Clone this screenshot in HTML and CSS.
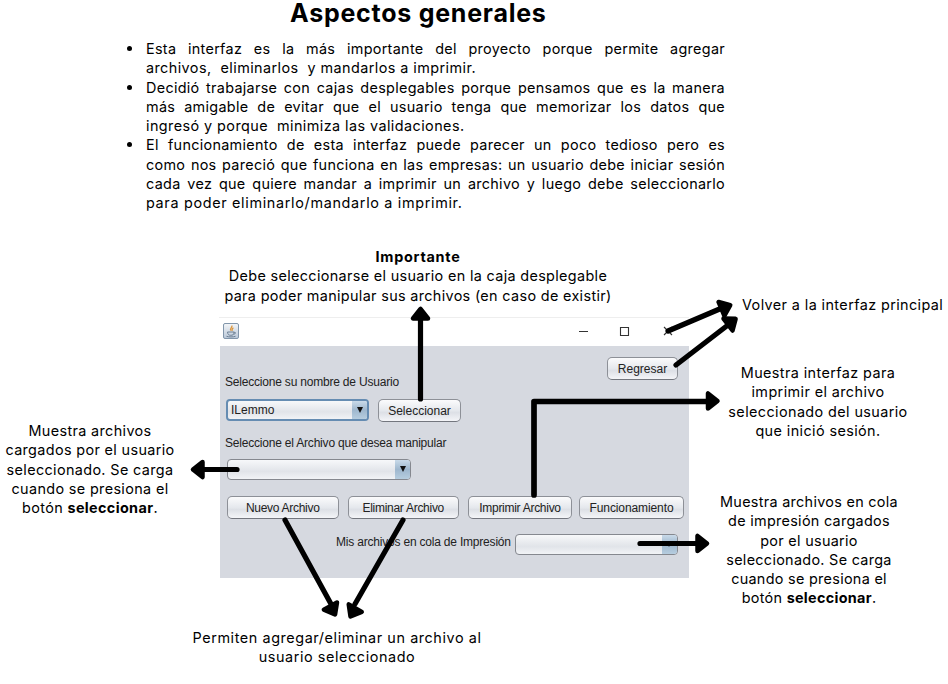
FILE: index.html
```
<!DOCTYPE html>
<html lang="es">
<head>
<meta charset="utf-8">
<title>Aspectos generales</title>
<link rel="stylesheet" href="styles.css">
</head>
<body>
<main class="page">
  <h1>Aspectos generales</h1>
  <ul class="intro">
    <li>
      <span class="line full">Esta interfaz es la más importante del proyecto porque permite agregar</span>
      <span class="line">archivos,&nbsp; eliminarlos&nbsp; y mandarlos a imprimir.</span>
    </li>
    <li>
      <span class="line full">Decidió trabajarse con cajas desplegables porque pensamos que es la manera</span>
      <span class="line full">más amigable de evitar que el usuario tenga que memorizar los datos que</span>
      <span class="line">ingresó y porque&nbsp; minimiza las validaciones.</span>
    </li>
    <li>
      <span class="line full">El funcionamiento de esta interfaz puede parecer un poco tedioso pero es</span>
      <span class="line full">como nos pareció que funciona en las empresas: un usuario debe iniciar sesión</span>
      <span class="line full">cada vez que quiere mandar a imprimir un archivo y luego debe seleccionarlo</span>
      <span class="line wide">para poder eliminarlo/mandarlo a imprimir.</span>
    </li>
  </ul>

  <section class="window">
    <header class="titlebar">
      <svg class="java" width="16" height="16" viewBox="0 0 16 16">
        <defs><linearGradient id="tile" x2="0" y2="1"><stop stop-color="#f4f6f8"/><stop offset="1" stop-color="#b9c7d8"/></linearGradient></defs>
        <rect x=".5" y=".5" width="15" height="15" rx="1.5" fill="url(#tile)" stroke="#8296ab"/>
        <path d="M8.800 2.500c1 2-2.600 2.800-1 5M10.400 4.800C8.400 5.800 9.600 6.700 8.800 8" fill="none" stroke="#dc963c" stroke-width="1.300"/>
        <path d="M4.500 9h6.500c0 2.600-1.200 3.300-3.200 3.300S4.700 11.500 4.500 9M11 9.300c2.200-.5 2 1.700-.5 1.900M3.500 13.300c2.500.8 6.500.8 9 0" fill="none" stroke="#6f8296"/>
      </svg>
      <svg class="controls" width="92" height="12" viewBox="0 0 92 12">
        <path d="M1 6.500h9M42.500 2.500h8v8h-8zM86 2l8 8M94 2l-8 8" transform="translate(-1 0)" fill="none" stroke="#333" stroke-width="1.100"/>
      </svg>
    </header>
    <div class="form">
      <div class="row back"><button class="btn">Regresar</button></div>
      <label class="user-label">Seleccione su nombre de Usuario</label>
      <div class="row user-row">
        <div class="combo focused"><span>ILemmo</span><i class="drop"></i></div>
        <button class="btn select">Seleccionar</button>
      </div>
      <label class="file-label">Seleccione el Archivo que desea manipular</label>
      <div class="combo file"><span></span><i class="drop"></i></div>
      <div class="row actions">
        <button class="btn">Nuevo Archivo</button>
        <button class="btn">Eliminar Archivo</button>
        <button class="btn">Imprimir Archivo</button>
        <button class="btn">Funcionamiento</button>
      </div>
      <div class="row queue">
        <label>Mis archivos en cola de Impresión</label>
        <div class="combo"><span></span><i class="drop"></i></div>
      </div>
    </div>
  </section>

  <p class="note important"><b>Importante</b><br>Debe seleccionarse el usuario en la caja desplegable<br>para poder manipular sus archivos (en caso de existir)</p>
  <p class="note main-ui">Volver a la interfaz principal</p>
  <p class="note print">Muestra interfaz para<br>imprimir el archivo<br>seleccionado del usuario<br>que inició sesión.</p>
  <p class="note files">Muestra archivos<br>cargados por el usuario<br>seleccionado. Se carga<br>cuando se presiona el<br>botón <b>seleccionar</b>.</p>
  <p class="note queued">Muestra archivos en cola<br>de impresión cargados<br>por el usuario<br>seleccionado. Se carga<br>cuando se presiona el<br>botón <b>seleccionar</b>.</p>
  <p class="note manage">Permiten agregar/eliminar un archivo al<br>usuario seleccionado</p>

  <svg class="arrows" width="948" height="684" viewBox="0 0 948 684">
    <defs>
      <path id="head" d="M-3 0L-12.500 -7.500V7.500Z" fill="#000" stroke="#000" stroke-width="4.500" stroke-linejoin="round"/>
    </defs>
    <g fill="none" stroke="#000" stroke-width="5.200" stroke-linecap="round" stroke-linejoin="round">
      <path d="M420.500 399V318M668 331L722 308M676 365L728 325M237 469.500H202M640 543.500H698M285 520L331 604M403 520L355 604"/>
      <path d="M534 495V401.500H708" stroke-width="5.700"/>
    </g>
    <use href="#head" transform="translate(420.500 306) rotate(-90)"/>
    <use href="#head" transform="translate(733 304) rotate(-23)"/>
    <use href="#head" transform="translate(738 317) rotate(-37)"/>
    <use href="#head" transform="translate(720.500 401)"/>
    <use href="#head" transform="translate(190 469.500) rotate(180)"/>
    <use href="#head" transform="translate(710 543.500)"/>
    <use href="#head" transform="translate(336.500 617) rotate(61)"/>
    <use href="#head" transform="translate(349 619) rotate(120)"/>
  </svg>
</main>
</body>
</html>
```
FILE: styles.css
```
* { box-sizing: border-box; }
body { margin: 0; background: #fff; color: #000; }
.page {
  position: relative;
  width: 948px;
  height: 684px;
  overflow: hidden;
  font: 14.4px/19.3px Inter, sans-serif;
  letter-spacing: .4px;
}
h1 {
  margin: 0 0 0 290px;
  font-size: 25px;
  line-height: 27px;
  font-weight: 700;
  letter-spacing: .75px;
  white-space: nowrap;
}
.intro { margin: 12px 0 0 146px; padding: 0; width: 579px; list-style: none; }
.intro li { position: relative; }
.intro li::before {
  content: "";
  position: absolute;
  left: -19px;
  top: 7px;
  width: 5px;
  height: 5px;
  border-radius: 50%;
  background: #000;
}
.line { display: block; white-space: nowrap; letter-spacing: .43px; }
.full { text-align-last: justify; white-space: normal; letter-spacing: .3px; }
.wide { letter-spacing: .67px; }

.window {
  width: 470px;
  margin: 104px 0 0 219px;
  border-top: 1px solid #eee;
  font: 12px/14px "Liberation Sans", Arial, sans-serif;
  letter-spacing: 0;
  color: #222;
}
.titlebar { height: 28px; display: flex; align-items: center; padding: 0 18px 2px 4px; }
.controls { margin-left: auto; overflow: visible; }
.form { height: 232px; margin-left: 1px; background: #d6d9e0; padding: 11px 4px 0 5px; }
.row { display: flex; }
.form label { display: block; letter-spacing: -.2px; }
.btn {
  height: 23px;
  padding: 1px 0 0;
  border: 1px solid #8d9097;
  border-bottom-color: #73767e;
  border-radius: 5px;
  background: linear-gradient(#fbfbfc, #e5e8ed 50%, #dde0e6 60%, #f4f5f8);
  font: inherit;
  letter-spacing: 0;
  color: #222;
}
.back { justify-content: flex-end; height: 23px; padding-right: 7px; }
.back .btn { width: 71px; }
.user-label { margin-top: -5px; }
.user-row { margin: 10px 0 0 1px; gap: 9px; }
.combo {
  display: flex;
  height: 21px;
  border: 1px solid #85888f;
  border-radius: 4px;
  background: linear-gradient(#f7f8fa, #e1e4e9 60%, #f1f3f6);
  overflow: hidden;
}
.combo span { flex: 1; padding: 2px 0 0 4px; }
.focused { width: 143px; height: 22px; border: 2px solid #658cb2; }
.focused span { padding-left: 3px; }
.drop {
  width: 15px;
  display: grid;
  place-items: center;
  background: linear-gradient(#c9dae9, #9eb7ce 50%, #b6cddf);
}
.drop::before {
  content: "";
  border: 3px solid transparent;
  border-top: 6px solid #111;
  border-bottom: 0;
}
.select { width: 83px; }
.file-label { margin-top: 14px; }
.file { width: 184px; margin: 9px 0 0 2px; }
.actions { margin: 16px 0 0 2px; gap: 9px; }
.actions .btn { width: 111.5px; letter-spacing: -.28px; }
.actions .btn:nth-child(3) { width: 104px; }
.actions .btn:nth-child(4) { width: 105px; margin-left: -2px; letter-spacing: -.1px; }
.queue { margin: 15px 0 0 111px; }
.queue label { width: 178.5px; padding-top: 1px; white-space: nowrap; }
.queue .combo { width: 163px; }

.note { position: absolute; margin: 0; text-align: center; white-space: nowrap; }
.important { left: 218px; top: 247px; width: 400px; letter-spacing: .34px; }
.important b { letter-spacing: .75px; }
.main-ui { left: 742px; top: 295px; }
.print { left: 718px; top: 363px; width: 200px; }
.files { left: 0; top: 421px; width: 180px; letter-spacing: .36px; }
.queued { left: 710px; top: 492px; width: 198px; letter-spacing: .3px; }
.manage { left: 187px; top: 628px; width: 300px; letter-spacing: .58px; }
.arrows { position: absolute; inset: 0; pointer-events: none; }
```
